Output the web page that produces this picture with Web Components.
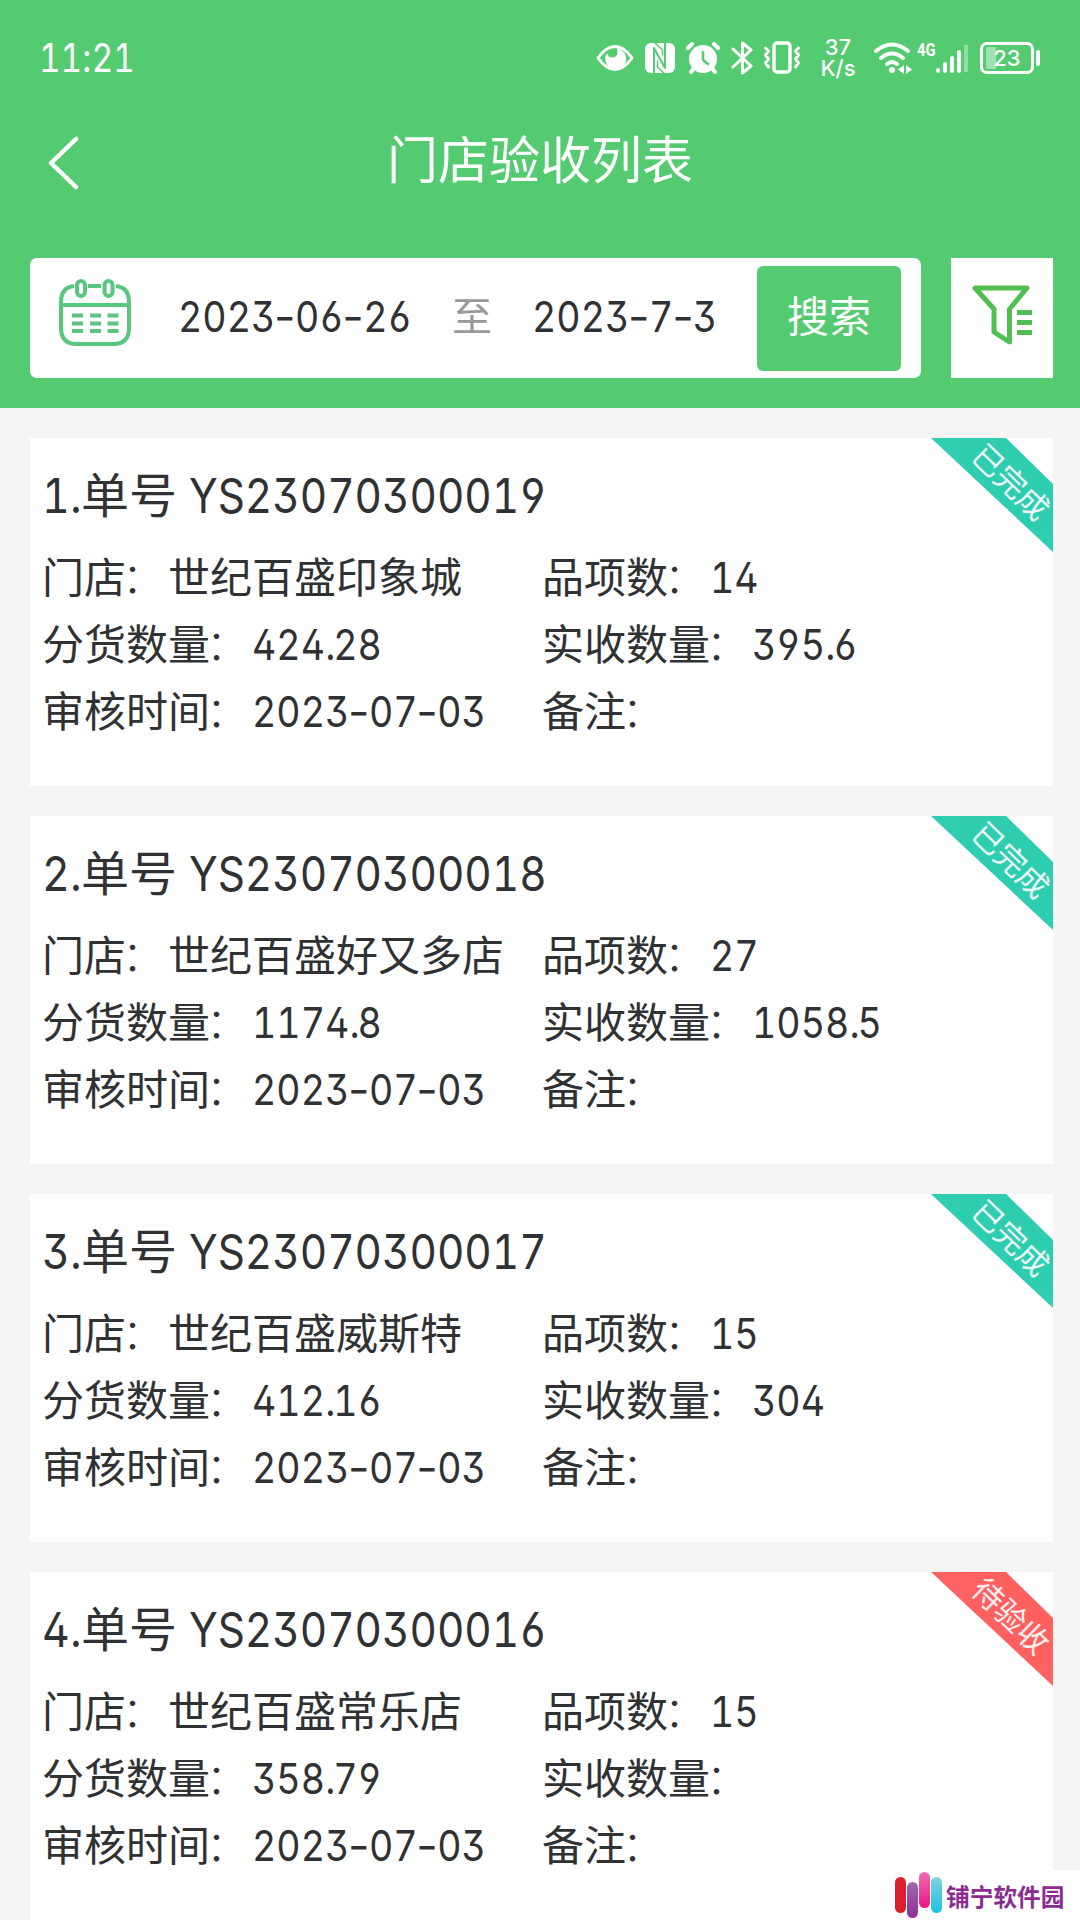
<!DOCTYPE html>
<html lang="zh-CN">
<head>
  <meta charset="UTF-8">
  <title>门店验收列表</title>
  <style>
    html, body {
      margin: 0;
      padding: 0;
    }

    body {
      width: 1080px;
      height: 1920px;
      overflow: hidden;
      background-color: #f5f5f5;
      color: #303133;
      font-family: "Noto Sans CJK SC", sans-serif;
      font-size: 42px;
      --green: #54cb71;
      --number-font: Inter, "Noto Sans CJK SC", sans-serif;
    }
  </style>
</head>
<body>
  <store-app></store-app>

  <script>
    // Digits get tabular widths, dashes are widened and dots tightened
    class NumText extends HTMLElement {
      connectedCallback() {
        const parts = this.textContent
          .replace(/\d+/g, '<b>$&</b>')
          .replace(/-/g, '<i>-</i>')
          .replace(/\./g, '<u>.</u>');

        this.attachShadow({ mode: 'open' }).innerHTML = `
          <style>
            :host {
              display: inline-block;
              font-family: var(--number-font);
              font-size: 1.01em;
              line-height: 1;
              white-space: nowrap;
              font-feature-settings: "ss01";
              transform: scaleX(var(--squeeze, 0.885));
              transform-origin: left;
            }
            b {
              font-weight: inherit;
              font-feature-settings: "tnum", "ss01";
            }
            i {
              display: inline-block;
              margin: 0 1.3px;
              font-style: normal;
              transform: scaleX(1.25);
            }
            u {
              text-decoration: none;
              letter-spacing: -3px;
            }
          </style>${parts}`;
      }
    }

    class StatusBar extends HTMLElement {
      constructor() {
        super();
        this.attachShadow({ mode: 'open' }).innerHTML = `
          <style>
            :host {
              display: flex;
              align-items: center;
              height: 116px;
              padding: 0 41px 0 39px;
              color: #fff;
            }
            .time {
              flex: 1;
              font-size: 40px;
              --squeeze: 0.83;
            }
            svg {
              display: block;
              flex: none;
              fill: none;
              stroke: #fff;
              stroke-width: 3;
              stroke-linecap: round;
              stroke-linejoin: round;
            }
            .speed {
              width: 36px;
              margin: 0 18px 0 19px;
              text-align: center;
              font: 500 22px/21px var(--number-font);
            }
            .speed div { white-space: nowrap; }
            .net {
              align-self: flex-start;
              margin: 41px 0 0 5px;
              width: 18px;
              font: 700 19px/17px "Roboto", sans-serif;
              transform: scaleX(0.78);
              transform-origin: left;
            }
            .battery {
              box-sizing: border-box;
              width: 54px;
              height: 32px;
              margin-left: 12px;
              border: 3px solid #fff;
              border-radius: 7px;
              padding: 2px 3px;
            }
            .level {
              height: 22px;
              border-radius: 2px;
              background: linear-gradient(90deg, rgba(255,255,255,.45) 10px, transparent 10px);
              text-align: center;
              font: 500 22px/22px var(--number-font);
            }
            .tip {
              width: 4px;
              height: 16px;
              margin: 0 -1px 0 2px;
              border-radius: 2px;
              background: #fff;
            }
          </style>
          <num-text class="time">11:21</num-text>
          <svg width="38" height="34" viewBox="0 0 38 34">
            <path d="M2 17Q10 5.500 19 5.500T36 17Q28 28.500 19 28.500T2 17Z"/>
            <path d="M11 12A10.500 10.500 0 1 0 25.500 9L21 7Q23 16 16.500 16.500Q12 16.500 11 12Z" fill="#fff" stroke="none"/>
          </svg>
          <svg width="30" height="34" viewBox="0 0 30 34" style="margin-left:11px">
            <rect y="2" width="30" height="30" rx="6" fill="#fff" stroke="none"/>
            <path d="M9 32V7L20 27V2" stroke="#54cb71" stroke-width="2" stroke-linecap="butt"/>
            <path d="M12.500 20v6L19 32M10 2L17.500 9v5" stroke="#54cb71" stroke-width="1.500"/>
          </svg>
          <svg width="34" height="34" viewBox="0 0 34 34" style="margin-left:11px">
            <circle cx="17" cy="18" r="14" fill="#fff" stroke="none"/>
            <path d="M2 7l4-4M28 3l4 4" stroke-width="4"/>
            <path d="M8 27l-3 4M26 27l3 4" stroke-width="4"/>
            <path d="M17 11v8l5 4" stroke="#54cb71" stroke-width="2.600"/>
          </svg>
          <svg width="22" height="36" viewBox="0 0 22 36" style="margin-left:11px">
            <path d="M2 9l18 17-8.500 7V3L20 10 2 27"/>
          </svg>
          <svg width="38" height="36" viewBox="0 0 38 36" style="margin-left:10px">
            <rect x="11" y="3" width="16" height="29" rx="3" stroke-width="3.400"/>
            <path d="M2.500 8l3 3-3 4 3 4-3 4 3 4M35.500 8l-3 3 3 4-3 4 3 4-3 4" stroke-width="3"/>
          </svg>
          <div class="speed"><div>37</div><div>K/s</div></div>
          <svg width="38" height="34" viewBox="0 0 38 34">
            <path d="M2 10q16-13 32 0" stroke-width="4"/>
            <path d="M7 17q11-9 22 0" stroke-width="4"/>
            <path d="M13 23q5-4 10 0" stroke-width="4"/>
            <circle cx="18" cy="29" r="3" fill="#fff" stroke="none"/>
            <path d="M30 24v9l-6-4.500zM32 24v9l6-4.500z" fill="#fff" stroke="none"/>
          </svg>
          <div class="net">4G</div>
          <svg width="33" height="34" viewBox="0 0 33 34">
            <g stroke-width="4">
              <path d="M3 29v1M10 23v7M17 17v13M24 11v19"/>
              <path d="M31 4v27" opacity=".35" stroke-linecap="butt"/>
            </g>
          </svg>
          <div class="battery"><div class="level">23</div></div>
          <div class="tip"></div>
        `;
      }
    }

    class NavBar extends HTMLElement {
      constructor() {
        super();
        this.attachShadow({ mode: 'open' }).innerHTML = `
          <style>
            :host {
              display: grid;
              grid-template-columns: 82px 1fr 82px;
              align-items: center;
              height: 92px;
              color: #fff;
            }
            svg { margin-left: 46px; }
            h1 {
              margin: 0;
              padding-bottom: 9px;
              text-align: center;
              font-size: 51px;
              font-weight: 400;
              line-height: 83px;
            }
          </style>
          <svg width="36" height="56" viewBox="0 0 36 56">
            <path d="M30 5L5 29L30 53" fill="none" stroke="#fff" stroke-width="4.500" stroke-linecap="round" stroke-linejoin="round"/>
          </svg>
          <h1><slot></slot></h1>
        `;
      }
    }

    class SearchBar extends HTMLElement {
      constructor() {
        super();
        this.attachShadow({ mode: 'open' }).innerHTML = `
          <style>
            :host {
              display: flex;
              justify-content: space-between;
              padding: 50px 27px 30px 30px;
            }
            .range {
              box-sizing: border-box;
              display: flex;
              align-items: center;
              width: 891px;
              height: 120px;
              padding: 0 20px 0 27px;
              border-radius: 7px;
              background: #fff;
            }
            .from, .to {
              flex: none;
              padding-bottom: 9px;
              line-height: 60px;
            }
            .from { width: 274px; margin-left: 45px; }
            .to { flex: 1; margin-left: 40px; }
            .sep {
              color: #999;
              width: 40px;
              font-size: 40px;
              line-height: 60px;
              padding-bottom: 8px;
            }
            svg { display: block; flex: none; }
            button {
              flex: none;
              width: 144px;
              height: 105px;
              padding: 0 0 9px;
              border: none;
              border-radius: 6px;
              background: var(--green);
              color: #fff;
              font: inherit;
            }
            .filter {
              box-sizing: border-box;
              width: 102px;
              height: 120px;
              padding: 25px 19px;
              background: #fff;
            }
          </style>
          <div class="range">
            <svg width="76" height="70" viewBox="0 0 76 70" fill="none" stroke="#58c67c" stroke-width="4" style="margin-top:-10px">
              <path d="M17 8C8 9 4 15 4 24V50Q4 66 20 66H56Q72 66 72 50V24C72 15 68 9 59 8M31 8H44M4 27H72"/>
              <rect x="20" y="3" width="8" height="15" rx="4"/>
              <rect x="47.500" y="3" width="8" height="15" rx="4"/>
              <path d="M15 37.500h11M33 37.500h11M50.500 37.500h11M15 45.500h11M33 45.500h11M50.500 45.500h11M15 53h11M33 53h11M50.500 53h11"/>
            </svg>
            <div class="from"><num-text>2023-06-26</num-text></div>
            <div class="sep">至</div>
            <div class="to"><num-text>2023-7-3</num-text></div>
            <button>搜索</button>
          </div>
          <div class="filter">
            <svg width="64" height="64" viewBox="0 0 64 64" fill="none" stroke="#50bf50" stroke-width="5" stroke-linejoin="round">
              <path d="M5 5H57L39.500 26V59L24 49V26Z"/>
              <path d="M47 29.500H62M47 39.500H62M47 49.500H62"/>
            </svg>
          </div>
        `;
      }
    }

    class CornerRibbon extends HTMLElement {
      constructor() {
        super();
        this.attachShadow({ mode: 'open' }).innerHTML = `
          <style>
            :host {
              position: absolute;
              top: 0;
              right: 0;
              width: 122px;
              height: 114px;
              background: #2fceb1;
              clip-path: polygon(0 0, 75px 0, 122px 46px, 122px 114px);
              color: #fff;
            }
            :host([pending]) { background: #ff6262; }
            span {
              position: absolute;
              left: 32px;
              top: 23px;
              width: 98px;
              line-height: 40px;
              text-align: center;
              font-size: 31px;
              transform: rotate(44deg);
              opacity: 0.9;
            }
          </style>
          <span><slot></slot></span>
        `;
      }
    }

    class OrderCard extends HTMLElement {
      connectedCallback() {
        const field = (label, name) => {
          const value = this.getAttribute(name) || '';
          const text = /^\d/.test(value) ? `<num-text>${value}</num-text>` : value;
          return `<div>${label}<span class="colon">：</span>${text}</div>`;
        };
        const pending = this.getAttribute('status') === '待验收' ? 'pending' : '';

        this.attachShadow({ mode: 'open' }).innerHTML = `
          <style>
            :host {
              position: relative;
              display: block;
              flex: none;
              box-sizing: border-box;
              height: 348px;
              padding: 22px 12px 0;
              background: #fff;
            }
            .title {
              display: flex;
              align-items: baseline;
              font-size: 48px;
              line-height: 64px;
            }
            .index { width: 39px; }
            .code { margin-left: 12px; --squeeze: 0.873; }
            .fields {
              display: grid;
              grid-template-columns: 500px 1fr;
              margin-top: 17px;
              line-height: 67px;
            }
            .fields div { height: 67px; white-space: nowrap; }
            .colon {
              margin: 0 4px 0 -4px;
              font-weight: 300;
            }
          </style>
          <div class="title"><num-text class="index">${this.getAttribute('index')}.</num-text>单号<num-text class="code">${this.getAttribute('code')}</num-text></div>
          <div class="fields">
            ${field('门店', 'store')}
            ${field('品项数', 'items')}
            ${field('分货数量', 'sent')}
            ${field('实收数量', 'received')}
            ${field('审核时间', 'date')}
            ${field('备注', 'note')}
          </div>
          <corner-ribbon ${pending}>${this.getAttribute('status')}</corner-ribbon>
        `;
      }
    }

    class SiteBadge extends HTMLElement {
      constructor() {
        super();
        this.attachShadow({ mode: 'open' }).innerHTML = `
          <style>
            :host {
              position: absolute;
              left: 885px;
              top: 1870px;
              box-sizing: border-box;
              display: flex;
              width: 195px;
              height: 50px;
              padding-left: 10px;
              background: #fff;
              color: #8b2b90;
              font-size: 23.7px;
              font-weight: 700;
              line-height: 52px;
              white-space: nowrap;
            }
            i {
              width: 10.500px;
              height: 36px;
              margin-right: 1.500px;
              border-radius: 6px;
            }
            i:nth-of-type(1) { margin-top: 7px; background: #dc1f2b; }
            i:nth-of-type(2) { margin-top: 12px; background: linear-gradient(#a466ad, #8d2f94); }
            i:nth-of-type(3) { margin-top: 2px; background: linear-gradient(#ee6cb0, #ec1486); }
            i:nth-of-type(4) { margin-top: 7px; background: linear-gradient(#7fd3df, #17c3e0); }
            span { margin-left: 3px; }
          </style>
          <i></i><i></i><i></i><i></i><span>铺宁软件园</span>
        `;
      }
    }

    class StoreApp extends HTMLElement {
      constructor() {
        super();
        this.attachShadow({ mode: 'open' }).innerHTML = `
          <style>
            :host {
              display: block;
              height: 1920px;
              overflow: hidden;
            }
            header { height: 408px; background: var(--green); }
            main {
              display: flex;
              flex-direction: column;
              gap: 30px;
              padding: 30px 27px 0 30px;
            }
          </style>
          <header>
            <status-bar></status-bar>
            <nav-bar>门店验收列表</nav-bar>
            <search-bar></search-bar>
          </header>
          <main>
            <order-card index="1" code="YS23070300019" store="世纪百盛印象城" items="14" sent="424.28" received="395.6" date="2023-07-03" status="已完成"></order-card>
            <order-card index="2" code="YS23070300018" store="世纪百盛好又多店" items="27" sent="1174.8" received="1058.5" date="2023-07-03" status="已完成"></order-card>
            <order-card index="3" code="YS23070300017" store="世纪百盛威斯特" items="15" sent="412.16" received="304" date="2023-07-03" status="已完成"></order-card>
            <order-card index="4" code="YS23070300016" store="世纪百盛常乐店" items="15" sent="358.79" received="" date="2023-07-03" status="待验收"></order-card>
          </main>
          <site-badge></site-badge>
        `;
      }
    }

    customElements.define('num-text', NumText);
    customElements.define('status-bar', StatusBar);
    customElements.define('nav-bar', NavBar);
    customElements.define('search-bar', SearchBar);
    customElements.define('corner-ribbon', CornerRibbon);
    customElements.define('order-card', OrderCard);
    customElements.define('site-badge', SiteBadge);
    customElements.define('store-app', StoreApp);
  </script>
</body>
</html>
